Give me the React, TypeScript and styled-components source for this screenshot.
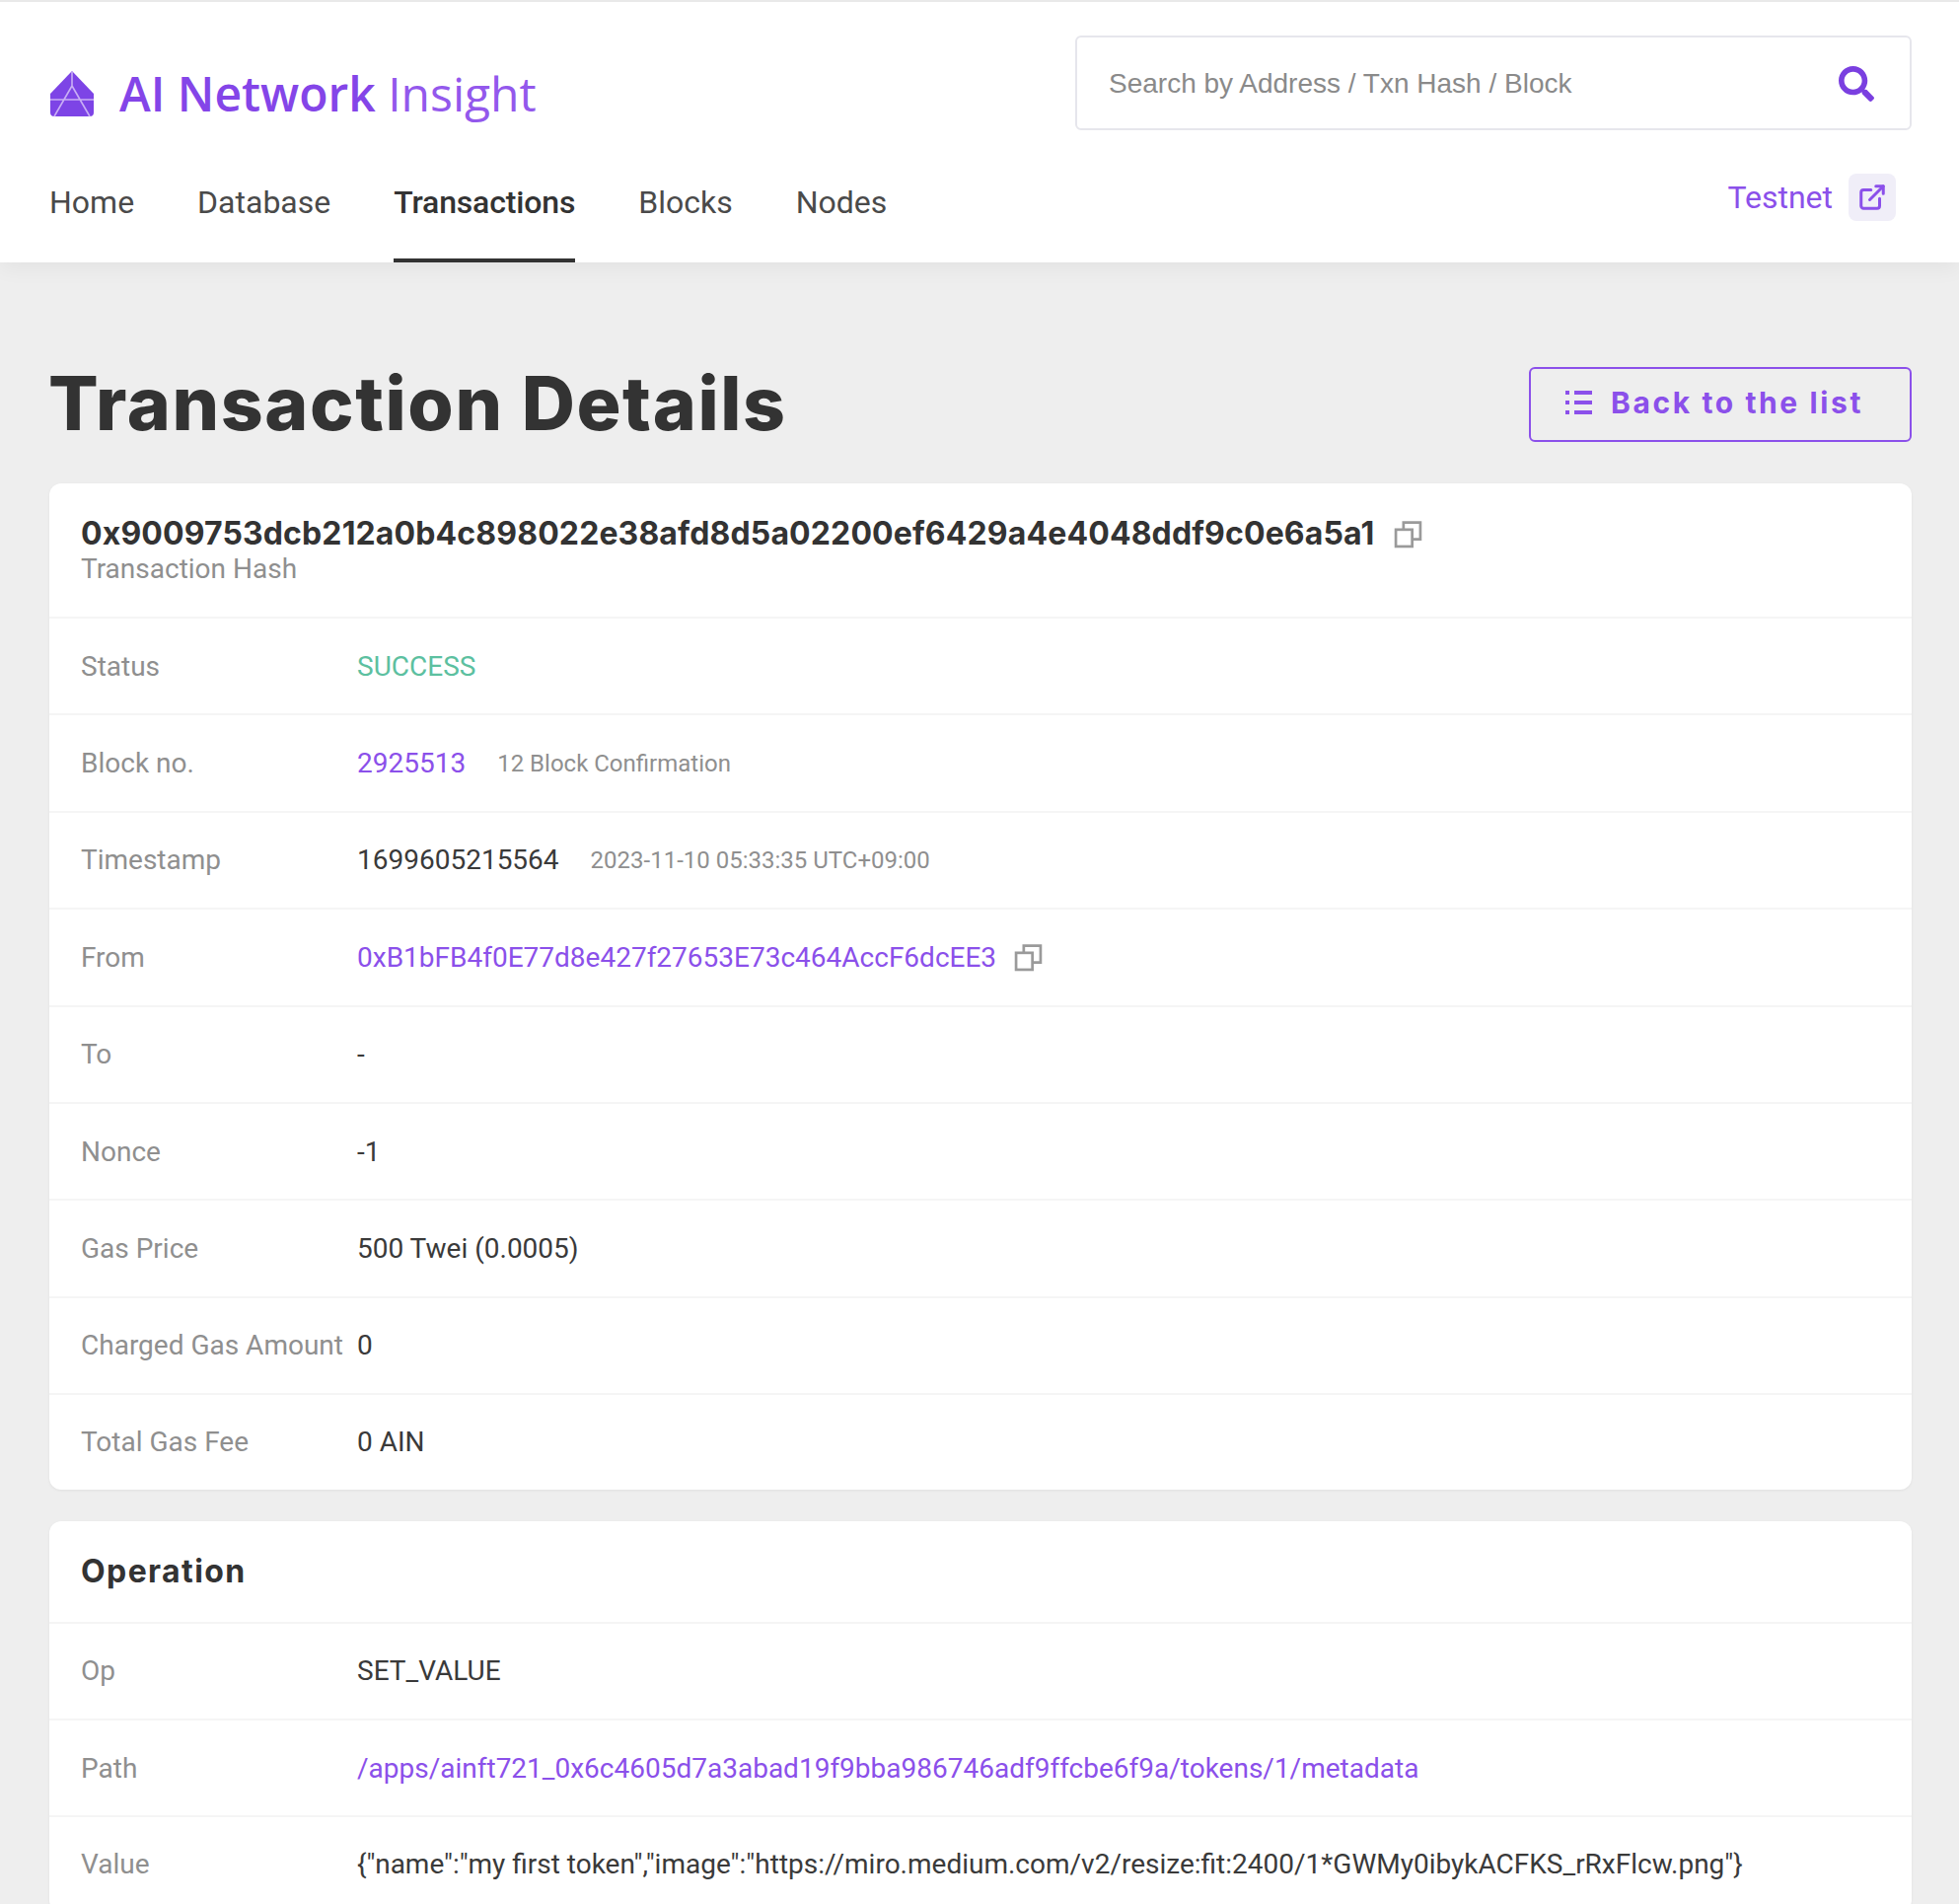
import styled, { createGlobalStyle } from "styled-components";
import { FaSearch } from "react-icons/fa";
import { ExternalLink } from "lucide-react";

const PURPLE = "#8b50ea";

const GlobalStyle = createGlobalStyle`
  html, body {
    margin: 0;
    height: 1930px;
    overflow: hidden;
    background: #eeeeee;
  }
  * {
    box-sizing: border-box;
  }
`;

const Logo = () => (
  <svg width="46" height="47" viewBox="0 0 46 47">
    <path d="M23 0 L45 23 V42 Q45 46 41 46 H5 Q1 46 1 42 V23 Z" fill="#7d44e6" />
    <path
      d="M23 0 V15 M23 15 L5 46 M23 15 L41 46 M1 29 H45"
      stroke="#c9aef5"
      strokeWidth="1.6"
      fill="none"
    />
  </svg>
);

const CopyIcon = () => (
  <svg width="29" height="29" viewBox="0 0 28 28" fill="none" stroke="#9a9a9a" strokeWidth="2.6">
    <rect x="2" y="9.5" width="16" height="16.5" />
    <path d="M9.5 9 V2.5 H26 V19 H18.5" />
  </svg>
);

const ListIcon = () => (
  <svg width="30" height="26" viewBox="0 0 30 26" fill="none" stroke={PURPLE} strokeWidth="4">
    <path d="M11 3 H29 M11 13 H29 M11 23 H29" />
    <path d="M2 3 H6 M2 13 H6 M2 23 H6" />
  </svg>
);

const rows1 = [
  { label: "To", value: "-" },
  { label: "Nonce", value: "-1" },
  { label: "Gas Price", value: "500 Twei (0.0005)" },
  { label: "Charged Gas Amount", value: "0" },
  { label: "Total Gas Fee", value: "0 AIN" },
];

const App = () => {
  return (
    <Page>
      <GlobalStyle />
      <Header>
        <TopRow>
          <Brand>
            <Logo />
            <BrandText>
              AI Network <span>Insight</span>
            </BrandText>
          </Brand>
          <Search>
            <SearchText>Search by Address / Txn Hash / Block</SearchText>
            <FaSearch size={36} color="#7a3fe0" />
          </Search>
        </TopRow>
        <NavRow>
          <NavList>
            <NavItem>Home</NavItem>
            <NavItem>Database</NavItem>
            <NavItem $active>Transactions</NavItem>
            <NavItem>Blocks</NavItem>
            <NavItem>Nodes</NavItem>
          </NavList>
          <Network>
            Testnet
            <NetworkIcon>
              <ExternalLink size={30} strokeWidth={2.4} color={PURPLE} />
            </NetworkIcon>
          </Network>
        </NavRow>
      </Header>
      <Main>
        <TitleRow>
          <Title>Transaction Details</Title>
          <BackButton>
            <ListIcon />
            Back to the list
          </BackButton>
        </TitleRow>
        <Card>
          <HashHead>
            <HashLine>
              <Hash>0x9009753dcb212a0b4c898022e38afd8d5a02200ef6429a4e4048ddf9c0e6a5a1</Hash>
              <CopyIcon />
            </HashLine>
            <HashLabel>Transaction Hash</HashLabel>
          </HashHead>
          <Row>
            <Label>Status</Label>
            <Success>SUCCESS</Success>
          </Row>
          <Row>
            <Label>Block no.</Label>
            <Link>2925513</Link>
            <Note>12 Block Confirmation</Note>
          </Row>
          <Row>
            <Label>Timestamp</Label>
            <Value>1699605215564</Value>
            <Note>2023-11-10 05:33:35 UTC+09:00</Note>
          </Row>
          <Row>
            <Label>From</Label>
            <Link>0xB1bFB4f0E77d8e427f27653E73c464AccF6dcEE3</Link>
            <CopyIcon />
          </Row>
          {rows1.map((r) => (
            <Row key={r.label}>
              <Label>{r.label}</Label>
              <Value>{r.value}</Value>
            </Row>
          ))}
        </Card>
        <Card>
          <OperationHead>Operation</OperationHead>
          <Row>
            <Label>Op</Label>
            <Value>SET_VALUE</Value>
          </Row>
          <Row>
            <Label>Path</Label>
            <Link>/apps/ainft721_0x6c4605d7a3abad19f9bba986746adf9ffcbe6f9a/tokens/1/metadata</Link>
          </Row>
          <Row>
            <Label>Value</Label>
            <Value>
              {'{"name":"my first token","image":"https://miro.medium.com/v2/resize:fit:2400/1*GWMy0ibykACFKS_rRxFlcw.png"}'}
            </Value>
          </Row>
        </Card>
      </Main>
    </Page>
  );
};

const Page = styled.div`
  font-family: Roboto, "Liberation Sans", sans-serif;
  color: #333333;
`;

const Header = styled.header`
  background: #ffffff;
  border-top: 2px solid #e9e9e9;
  height: 266px;
  padding: 0 48px 0 50px;
  box-shadow: 0 6px 20px rgba(0, 0, 0, 0.05);
  position: relative;
`;

const TopRow = styled.div`
  display: flex;
  justify-content: space-between;
  align-items: flex-start;
  height: 154px;
  padding-top: 34px;
`;

const Brand = styled.div`
  display: flex;
  align-items: center;
  gap: 25px;
  margin-top: 31px;
`;

const BrandText = styled.div`
  font-family: "Open Sans", sans-serif;
  font-size: 48px;
  font-weight: 600;
  line-height: 56px;
  color: #8445e8;
  span {
    font-weight: 400;
    color: #9358ec;
  }
`;

const Search = styled.div`
  width: 848px;
  height: 96px;
  border: 2px solid #e6e6ec;
  border-radius: 6px;
  display: flex;
  align-items: center;
  justify-content: space-between;
  padding: 2px 36px 0 32px;
`;

const SearchText = styled.span`
  font-family: "Liberation Sans", sans-serif;
  font-size: 28px;
  color: #8a8a8a;
`;

const NavRow = styled.div`
  display: flex;
  justify-content: space-between;
  align-items: flex-start;
  padding-right: 16px;
`;

const NavList = styled.nav`
  display: flex;
  gap: 64px;
`;

const NavItem = styled.div<{ $active?: boolean }>`
  height: 110px;
  padding-top: 29px;
  font-size: 32px;
  line-height: 40px;
  font-weight: ${(p) => (p.$active ? 500 : 400)};
  letter-spacing: ${(p) => (p.$active ? "-0.16px" : "0")};
  color: ${(p) => (p.$active ? "#333333" : "#4a4a4a")};
  border-bottom: 4px solid ${(p) => (p.$active ? "#333333" : "transparent")};
`;

const Network = styled.div`
  display: flex;
  align-items: center;
  gap: 16px;
  margin-top: 20px;
  font-size: 32px;
  color: ${PURPLE};
`;

const NetworkIcon = styled.div`
  width: 48px;
  height: 48px;
  border-radius: 8px;
  background: #f0eef8;
  display: flex;
  align-items: center;
  justify-content: center;
`;

const Main = styled.main`
  padding: 106px 48px 0 50px;
  display: flex;
  flex-direction: column;
  gap: 32px;
`;

const TitleRow = styled.div`
  display: flex;
  justify-content: space-between;
  align-items: center;
  height: 76px;
  margin-bottom: 10px;
`;

const Title = styled.h1`
  margin: -3px 0 0 -1px;
  font-family: Inter, sans-serif;
  font-size: 75px;
  font-weight: 800;
  letter-spacing: 1.6px;
  color: #333333;
`;

const BackButton = styled.button`
  width: 388px;
  height: 76px;
  border: 2px solid ${PURPLE};
  border-radius: 6px;
  background: transparent;
  display: flex;
  align-items: center;
  gap: 18px;
  padding: 0 0 5px 33px;
  font-family: Inter, sans-serif;
  font-size: 30px;
  font-weight: 700;
  letter-spacing: 2.6px;
  color: ${PURPLE};
`;

const Card = styled.section`
  background: #ffffff;
  border-radius: 12px;
  box-shadow: 0 1px 3px rgba(0, 0, 0, 0.06);
`;

const HashHead = styled.div`
  height: 137px;
  padding: 30px 32px 0;
  border-bottom: 2px solid #f5f5f5;
`;

const HashLine = styled.div`
  display: flex;
  align-items: center;
  gap: 20px;
`;

const Hash = styled.span`
  font-family: Inter, sans-serif;
  font-size: 32px;
  font-weight: 700;
  line-height: 42px;
  letter-spacing: 0.13px;
  color: #333333;
`;

const HashLabel = styled.div`
  font-size: 28px;
  line-height: 30px;
  color: #8f8f8f;
`;

const OperationHead = styled.div`
  height: 104px;
  padding: 31px 32px 0;
  border-bottom: 2px solid #f5f5f5;
  font-family: Inter, sans-serif;
  font-size: 32px;
  font-weight: 700;
  line-height: 40px;
  letter-spacing: 1.4px;
  color: #333333;
`;

const Row = styled.div`
  display: flex;
  align-items: center;
  height: 98.4px;
  padding: 0 32px;
  border-bottom: 2px solid #f5f5f5;
  &:last-child {
    border-bottom: none;
    height: 95.4px;
  }
  svg {
    margin-left: 18px;
  }
`;

const Label = styled.div`
  width: 280px;
  flex-shrink: 0;
  font-size: 28px;
  color: #8f8f8f;
`;

const Value = styled.div`
  font-size: 28px;
  color: #3a3a3a;
`;

const Link = styled.a`
  font-size: 28px;
  color: ${PURPLE};
`;

const Success = styled.div`
  font-size: 28px;
  color: #5cc0a0;
`;

const Note = styled.span`
  margin-left: 32px;
  font-size: 24px;
  color: #8f8f8f;
`;

export default App;
